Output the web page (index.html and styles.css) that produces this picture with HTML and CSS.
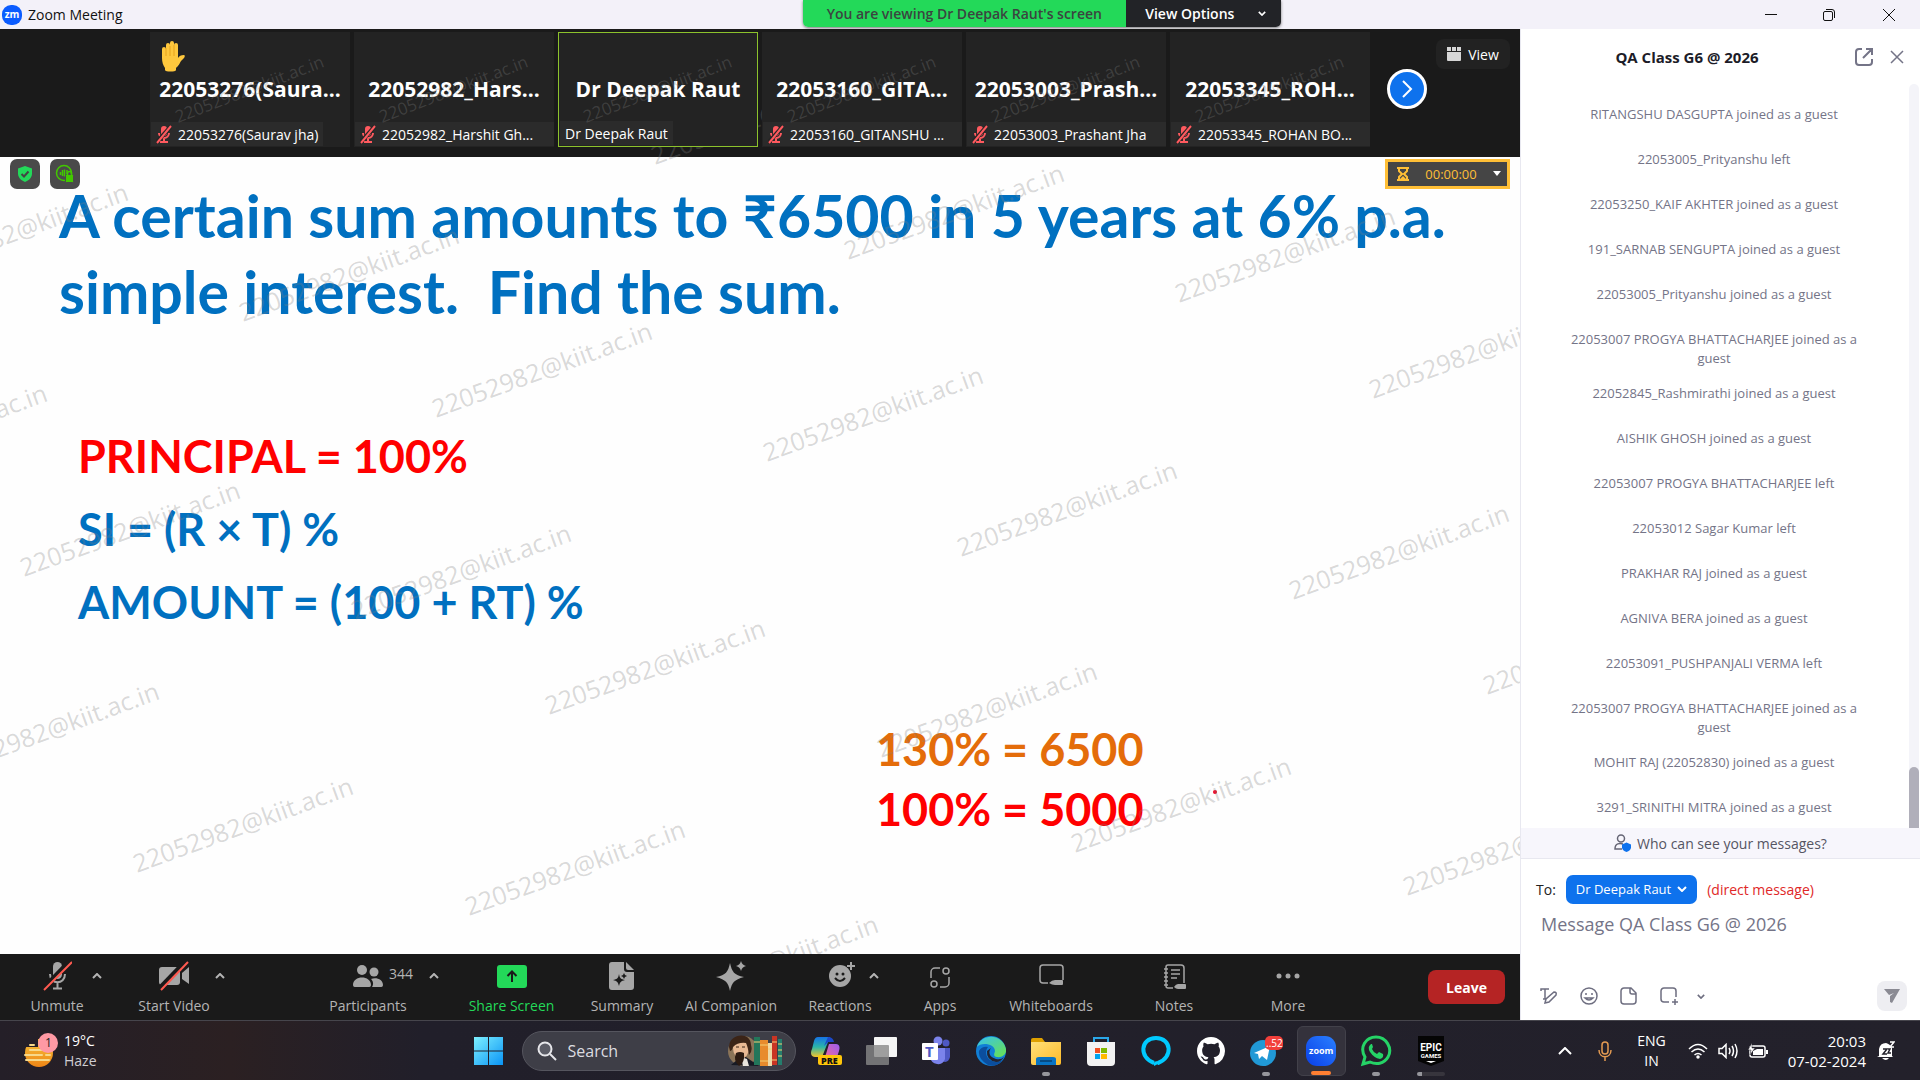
FILE: index.html
```html
<!DOCTYPE html>
<html lang="en">
<head>
<meta charset="utf-8">
<title>Zoom Meeting</title>
<link rel="stylesheet" href="styles.css">
</head>
<body>
<svg class="defs" aria-hidden="true">
  <defs>
    <symbol id="mic-off" viewBox="0 0 16 20"><rect x="5" y="2" width="6" height="10" rx="3" fill="#ff5a5f"/><path d="M3 9a5 5 0 0 0 10 0M8 14v4M4 18h8" fill="none" stroke="#ff5a5f" stroke-width="2"/><path d="M0 19 15 2" stroke="#252525" stroke-width="4"/><path d="M1 19 15 2" stroke="#ff5a5f" stroke-width="2"/></symbol>
    <symbol id="up" viewBox="0 0 10 6"><path d="M1 5l4-4 4 4" fill="none" stroke="currentColor" stroke-width="2"/></symbol>
    <symbol id="down" viewBox="0 0 10 6"><path d="M1 1l4 4 4-4" fill="none" stroke="currentColor" stroke-width="2"/></symbol>
    <linearGradient id="win" x1="0" y1="0" x2="1" y2="1"><stop offset="0" stop-color="#7df0ff"/><stop offset="1" stop-color="#0a94f5"/></linearGradient>
    <linearGradient id="zm" x1="0" y1="1" x2="1" y2="0"><stop offset="0" stop-color="#0a3fe8"/><stop offset="1" stop-color="#2a80ff"/></linearGradient>
    <linearGradient id="haze" x1="0" y1="0" x2="0" y2="1"><stop offset="0" stop-color="#f6c33a"/><stop offset="1" stop-color="#ee8516"/></linearGradient>
    <linearGradient id="edge-a" x1="0" y1="0" x2="1" y2="1"><stop offset="0" stop-color="#35c1f1"/><stop offset="1" stop-color="#6be24b"/></linearGradient>
    <linearGradient id="cop-a" x1="0" y1="0" x2="0" y2="1"><stop offset="0" stop-color="#1672e6"/><stop offset=".5" stop-color="#2bb6a8"/><stop offset="1" stop-color="#f3c62c"/></linearGradient>
    <linearGradient id="cop-b" x1="1" y1="0" x2="0" y2="1"><stop offset="0" stop-color="#9a5cf0"/><stop offset="1" stop-color="#ff6e8e"/></linearGradient>
    <linearGradient id="fold" x1="0" y1="0" x2="1" y2="1"><stop offset="0" stop-color="#ffe07a"/><stop offset="1" stop-color="#fdbb28"/></linearGradient>
  </defs>
</svg>

<div class="app">
  <header class="titlebar">
    <div class="title"><span class="zm-logo">zm</span><span>Zoom Meeting</span></div>
    <div class="banner">
      <span class="viewing">You are viewing Dr Deepak Raut's screen</span>
      <button class="view-options">View Options <svg width="8" height="5"><use href="#down"/></svg></button>
    </div>
    <div class="win-controls">
      <button aria-label="Minimize"><svg width="14" height="14"><path d="M1 6.500h12" stroke="#111"/></svg></button>
      <button aria-label="Restore"><svg width="14" height="14" fill="none" stroke="#111"><rect x="1.500" y="3.500" width="9" height="9" rx="1.500"/><path d="M4 1.500h6a2.500 2.500 0 0 1 2.500 2.500v6"/></svg></button>
      <button aria-label="Close"><svg width="14" height="14"><path d="M1 1l12 12M13 1 1 13" stroke="#111"/></svg></button>
    </div>
  </header>

  <div class="main">
    <main class="meeting">
      <div class="stage">
        <section class="filmstrip">
          <div class="tiles">
            <div class="tile"><span class="hand"><svg width="26" height="32" viewBox="0 0 26 32"><path d="M3 9a2 2 0 0 1 4 0V5a2 2 0 0 1 4 0V3a2 2 0 0 1 4 0v2a2 2 0 0 1 4 0v13c1-2 3-3 6-3 1 0 1 2 0 3l-3 3c-2 4-3 5-5 7v2c0 2-11 2-11 0v-2c-2-3-3-6-3-10z" fill="#ffc83d"/><path d="M7 8v8M11 6v10M15 5v11" stroke="#e8a31c"/></svg></span><b>22053276(Saura...</b><span class="tag"><svg width="16" height="20"><use href="#mic-off"/></svg>22053276(Saurav jha)</span></div>
            <div class="tile"><b>22052982_Hars...</b><span class="tag full"><svg width="16" height="20"><use href="#mic-off"/></svg>22052982_Harshit Gh...</span></div>
            <div class="tile active"><b>Dr Deepak Raut</b><span class="tag">Dr Deepak Raut</span></div>
            <div class="tile"><b>22053160_GITA...</b><span class="tag full"><svg width="16" height="20"><use href="#mic-off"/></svg>22053160_GITANSHU ...</span></div>
            <div class="tile"><b>22053003_Prash...</b><span class="tag full"><svg width="16" height="20"><use href="#mic-off"/></svg>22053003_Prashant Jha</span></div>
            <div class="tile"><b>22053345_ROH...</b><span class="tag full"><svg width="16" height="20"><use href="#mic-off"/></svg>22053345_ROHAN BO...</span></div>
          </div>
          <button class="next" aria-label="Next"><svg width="12" height="18"><path d="M2 1l8 8-8 8" fill="none" stroke="#fff" stroke-width="2"/></svg></button>
          <button class="view"><svg width="14" height="14" fill="#d6d6d6"><path d="M0 5h14v8a1 1 0 0 1-1 1H1a1 1 0 0 1-1-1z"/><rect width="4" height="4"/><rect x="5" width="4" height="4"/><rect x="10" width="4" height="4"/></svg>View</button>
        </section>

        <section class="slide">
          <h1>A certain sum amounts to ₹6500 in 5 years at 6% p.a.<br>simple interest.&nbsp; Find the sum.</h1>
          <div class="formulas">
            <p class="red">PRINCIPAL = 100%</p>
            <p>SI = (R × T) %</p>
            <p>AMOUNT = (100 + RT) %</p>
          </div>
          <div class="answers">
            <p class="orange">130% = 6500</p>
            <p class="red">100% = 5000</p>
          </div>
          <span class="pointer"></span>
          <div class="badges">
            <span><svg width="18" height="18" viewBox="0 0 18 18"><path d="M9 1l7 2.500v5c0 4-3 7-7 8.500C5 15.500 2 12.500 2 8.500v-5z" fill="#23d959"/><path d="M5.500 9l2.500 2.500 4.500-5" fill="none" stroke="#444" stroke-width="2"/></svg></span>
            <span><svg width="20" height="20" viewBox="0 0 20 20"><circle cx="9" cy="9" r="7.500" fill="none" stroke="#42c800" stroke-width="1.500"/><path d="M5.500 8v3M7.500 6v6M9.500 5.500v7M12 6v4" stroke="#42c800" stroke-width="1.500"/><rect x="10.500" y="10.500" width="8" height="8" rx="1" fill="#42c800" stroke="#4a4a4a"/><path d="M12.500 11V9.500a2 2 0 0 1 4 0V11" fill="none" stroke="#42c800" stroke-width="1.500"/></svg></span>
          </div>
          <button class="timer"><svg width="12" height="14" viewBox="0 0 12 14"><path d="M0 1h12M0 13h12M2 1v3l3 3-3 3v3M10 1v3L7 7l3 3v3" fill="none" stroke="#ffbf36" stroke-width="2"/><path d="M3 12l3-3 3 3z" fill="#ffbf36"/></svg><span>00:00:00</span><svg width="8" height="6"><path d="M0 0h8L4 5z" fill="#fff"/></svg></button>
        </section>

        <svg class="watermarks wm-small" aria-hidden="true">
          <text transform="translate(178 94) rotate(-21)">22052982@kiit.ac.in</text>
          <text transform="translate(382 94) rotate(-21)">22052982@kiit.ac.in</text>
          <text transform="translate(586 94) rotate(-21)">22052982@kiit.ac.in</text>
          <text transform="translate(790 94) rotate(-21)">22052982@kiit.ac.in</text>
          <text transform="translate(994 94) rotate(-21)">22052982@kiit.ac.in</text>
          <text transform="translate(1198 94) rotate(-21)">22052982@kiit.ac.in</text>
        </svg>
        <svg class="watermarks wm-large" aria-hidden="true">
          <text transform="translate(-88 250) rotate(-20)">22052982@kiit.ac.in</text>
          <text transform="translate(243 293) rotate(-20)">22052982@kiit.ac.in</text>
          <text transform="translate(436 389) rotate(-20)">22052982@kiit.ac.in</text>
          <text transform="translate(655 136) rotate(-20)">22052982@kiit.ac.in</text>
          <text transform="translate(848 231) rotate(-20)">22052982@kiit.ac.in</text>
          <text transform="translate(1179 274) rotate(-20)">22052982@kiit.ac.in</text>
          <text transform="translate(767 433) rotate(-20)">22052982@kiit.ac.in</text>
          <text transform="translate(961 528) rotate(-20)">22052982@kiit.ac.in</text>
          <text transform="translate(1293 571) rotate(-20)">22052982@kiit.ac.in</text>
          <text transform="translate(1373 370) rotate(-20)">22052982@kiit.ac.in</text>
          <text transform="translate(1487 666) rotate(-20)">22052982@kiit.ac.in</text>
          <text transform="translate(-169 451) rotate(-20)">22052982@kiit.ac.in</text>
          <text transform="translate(24 548) rotate(-20)">22052982@kiit.ac.in</text>
          <text transform="translate(355 591) rotate(-20)">22052982@kiit.ac.in</text>
          <text transform="translate(549 686) rotate(-20)">22052982@kiit.ac.in</text>
          <text transform="translate(881 729) rotate(-20)">22052982@kiit.ac.in</text>
          <text transform="translate(1075 824) rotate(-20)">22052982@kiit.ac.in</text>
          <text transform="translate(1407 867) rotate(-20)">22052982@kiit.ac.in</text>
          <text transform="translate(-57 749) rotate(-20)">22052982@kiit.ac.in</text>
          <text transform="translate(137 844) rotate(-20)">22052982@kiit.ac.in</text>
          <text transform="translate(469 887) rotate(-20)">22052982@kiit.ac.in</text>
          <text transform="translate(662 982) rotate(-20)">22052982@kiit.ac.in</text>
        </svg>
      </div>

      <nav class="toolbar">
        <div class="cell c1"><button class="tool"><svg width="30" height="30" viewBox="0 0 30 30"><rect x="11" y="1" width="9" height="17" rx="4.500" fill="#a6a6a6"/><path d="M8 13c0 11 15 11 15 0M15.500 21v6M11 27.500h9" fill="none" stroke="#a6a6a6" stroke-width="2"/><path d="M1 28 28 0" stroke="#1a1a1a" stroke-width="5"/><path d="M2 29 30 1" stroke="#ff5a50" stroke-width="2"/></svg><span>Unmute</span></button><button class="caret" aria-label="Audio options"><svg width="10" height="6"><use href="#up"/></svg></button></div>
        <div class="cell c2"><button class="tool"><svg width="30" height="30" viewBox="0 0 30 30"><rect x="0" y="6" width="21" height="18" rx="3" fill="#a6a6a6"/><path d="M23 12l7-6v17l-7-5z" fill="#a6a6a6"/><path d="M1 27 27 0" stroke="#1a1a1a" stroke-width="5"/><path d="M2 29 29 1" stroke="#ff5a50" stroke-width="2"/></svg><span>Start Video</span></button><button class="caret" aria-label="Video options"><svg width="10" height="6"><use href="#up"/></svg></button></div>
        <div class="cell c3"><button class="tool"><svg width="30" height="30" viewBox="0 0 30 30" fill="#a6a6a6"><circle cx="9" cy="9" r="5"/><circle cx="21" cy="11" r="4.500"/><path d="M0 24c0-10 18-10 18 0 0 2-2 2-2 2H2s-2 0-2-2zM19 26c2-3 1-6-1-8 6-2 12 1 12 6 0 2-2 2-2 2z"/></svg><span>Participants</span></button><span class="count">344</span><button class="caret" aria-label="Participant options"><svg width="10" height="6"><use href="#up"/></svg></button></div>
        <div class="cell c4"><button class="tool share"><svg width="30" height="30" viewBox="0 0 30 30"><rect y="4" width="30" height="23" rx="3" fill="#23d959"/><path d="M15 21V11M10.500 15 15 10.500 19.500 15" fill="none" stroke="#1a1a1a" stroke-width="2"/></svg><span>Share Screen</span></button></div>
        <div class="cell"><button class="tool"><svg width="30" height="30" viewBox="0 0 30 30" fill="#a6a6a6"><path d="M5 1h12v7a3 3 0 0 0 3 3h7v15a3 3 0 0 1-3 3H5a3 3 0 0 1-3-3V4a3 3 0 0 1 3-3z"/><path d="M19 1l8 8h-6a2 2 0 0 1-2-2z"/><path d="M12 13c1 5 2 5 6 6-4 1-5 2-6 6-1-4-2-5-6-6 4-1 5-1 6-6zM17 12l1 2 2 1-2 1-1 2-1-2-2-1 2-1z" fill="#1a1a1a"/></svg><span>Summary</span></button></div>
        <div class="cell"><button class="tool"><svg width="30" height="30" viewBox="0 0 30 30" fill="#a6a6a6"><path d="M14 2c2 9 4 12 14 14-10 3-12 5-14 14C12 21 10 19 0 16 10 14 12 11 14 2zM25 0c1 3 2 4 5 5-3 1-4 2-5 5-1-3-2-4-5-5 3-1 4-2 5-5z"/></svg><span>AI Companion</span></button></div>
        <div class="cell c7"><button class="tool"><svg width="30" height="30" viewBox="0 0 30 30"><circle cx="15" cy="15" r="11" fill="#a6a6a6"/><path d="M22 5h8M26 1v8" stroke="#1a1a1a" stroke-width="4"/><path d="M22 5h8M26 1v8" stroke="#a6a6a6" stroke-width="2"/><circle cx="12" cy="13" r="1.500" fill="#1a1a1a"/><circle cx="18" cy="13" r="1.500" fill="#1a1a1a"/><path d="M10 17q5 6 10 0" fill="none" stroke="#1a1a1a" stroke-width="2"/></svg><span>Reactions</span></button><button class="caret" aria-label="Reaction options"><svg width="10" height="6"><use href="#up"/></svg></button></div>
        <div class="cell"><button class="tool"><svg width="30" height="30" viewBox="0 0 30 30" fill="none" stroke="#a6a6a6" stroke-width="1.500"><circle cx="21" cy="10" r="3"/><circle cx="9" cy="23" r="3"/><path d="M6 17v-6a4 4 0 0 1 4-4h5M24 16v6a4 4 0 0 1-4 4h-5"/></svg><span>Apps</span></button></div>
        <div class="cell"><button class="tool"><svg width="30" height="30" viewBox="0 0 30 30" fill="none" stroke="#a6a6a6" stroke-width="1.500"><path d="M12 22H7a3 3 0 0 1-3-3V7a3 3 0 0 1 3-3h17a3 3 0 0 1 3 3v12"/><path d="M13 22q3-3 6-3h7a1 1 0 0 1 1 1v3a1 1 0 0 1-1 1h-7q-3 0-6-2z" fill="#a6a6a6" stroke="none"/></svg><span>Whiteboards</span></button></div>
        <div class="cell"><button class="tool"><svg width="30" height="30" viewBox="0 0 30 30" fill="none" stroke="#a6a6a6" stroke-width="1.500"><path d="M14 27H9a2 2 0 0 1-2-2V6a2 2 0 0 1 2-2h13a3 3 0 0 1 3 3v15M12 9h9M12 13h9M12 17h6M5 8h4M5 12h4M5 16h4M5 20h4M5 24h4"/><path d="M15 26q2-3 4-3h7a1 1 0 0 1 1 1v3a1 1 0 0 1-1 1h-7q-2 0-4-2z" fill="#a6a6a6" stroke="none"/></svg><span>Notes</span></button></div>
        <div class="cell"><button class="tool"><svg width="30" height="30" viewBox="0 0 30 30" fill="#a6a6a6"><circle cx="6" cy="15" r="2.500"/><circle cx="15" cy="15" r="2.500"/><circle cx="24" cy="15" r="2.500"/></svg><span>More</span></button></div>
        <div class="cell end"><button class="leave">Leave</button></div>
      </nav>
    </main>

    <aside class="chat">
      <header class="chat-head">
        <h2>QA Class G6 @ 2026</h2>
        <button aria-label="Pop out"><svg width="20" height="20" viewBox="0 0 20 20" fill="none" stroke="#747487" stroke-width="2"><path d="M8 2H5a3 3 0 0 0-3 3v10a3 3 0 0 0 3 3h10a3 3 0 0 0 3-3v-3M12 2h6v6M18 2l-9 9"/></svg></button>
        <button aria-label="Close chat"><svg width="14" height="14"><path d="M1 1l12 12M13 1 1 13" stroke="#747487" stroke-width="1.500"/></svg></button>
      </header>
      <div class="log">
        <ul class="messages">
          <li>RITANGSHU DASGUPTA joined as a guest</li>
          <li>22053005_Prityanshu left</li>
          <li>22053250_KAIF AKHTER joined as a guest</li>
          <li>191_SARNAB SENGUPTA joined as a guest</li>
          <li>22053005_Prityanshu joined as a guest</li>
          <li>22053007 PROGYA BHATTACHARJEE joined as a guest</li>
          <li>22052845_Rashmirathi joined as a guest</li>
          <li>AISHIK GHOSH joined as a guest</li>
          <li>22053007 PROGYA BHATTACHARJEE left</li>
          <li>22053012 Sagar Kumar left</li>
          <li>PRAKHAR RAJ joined as a guest</li>
          <li>AGNIVA BERA joined as a guest</li>
          <li>22053091_PUSHPANJALI VERMA left</li>
          <li>22053007 PROGYA BHATTACHARJEE joined as a guest</li>
          <li>MOHIT RAJ (22052830) joined as a guest</li>
          <li>3291_SRINITHI MITRA joined as a guest</li>
        </ul>
        <div class="track"><div class="thumb"></div></div>
      </div>
      <button class="who"><svg width="18" height="18" viewBox="0 0 18 18"><circle cx="7" cy="4.500" r="3.500" fill="none" stroke="#666675" stroke-width="1.500"/><path d="M8 15H1c0-6 5-6 8-5" fill="none" stroke="#666675" stroke-width="1.500"/><path d="M12.500 8.500l4.500 2v3c0 2-2 3.500-4.500 4.500C10 17 8 15.500 8 13.500v-3z" fill="#0e72ed"/></svg>Who can see your messages?</button>
      <div class="composer">
        <div class="to"><span>To:</span><button class="recipient">Dr Deepak Raut <svg width="10" height="6"><use href="#down"/></svg></button><span class="direct">(direct message)</span></div>
        <textarea aria-label="Message" placeholder="Message QA Class G6 @ 2026"></textarea>
        <div class="actions">
          <button aria-label="Format"><svg width="18" height="18" viewBox="0 0 18 18" fill="none" stroke="#6e6e80" stroke-width="1.500"><path d="M1 4V2h8M5 2v10H3M5 16l1-4 8-7q3 0 2 3l-7 7z"/></svg></button>
          <button aria-label="Emoji"><svg width="18" height="18" viewBox="0 0 18 18" fill="none" stroke="#6e6e80" stroke-width="1.500"><circle cx="9" cy="9" r="8"/><path d="M5 11q4 4 8 0z"/><path d="M6 6v2M12 6v2"/></svg></button>
          <button aria-label="File"><svg width="18" height="18" viewBox="0 0 18 18" fill="none" stroke="#6e6e80" stroke-width="1.500"><path d="M4 1h7l5 5v8a3 3 0 0 1-3 3H4a3 3 0 0 1-3-3V4a3 3 0 0 1 3-3zM10 1v4a2 2 0 0 0 2 2h4"/></svg></button>
          <button aria-label="Screenshot"><svg width="18" height="18" viewBox="0 0 18 18" fill="none" stroke="#6e6e80" stroke-width="1.500"><path d="M9 15H4a3 3 0 0 1-3-3V4a3 3 0 0 1 3-3h9a3 3 0 0 1 3 3v6M12 15h6M15 12v6"/></svg></button>
          <button class="more" aria-label="More"><svg width="8" height="5"><use href="#down"/></svg></button>
          <button class="send" aria-label="Send"><svg width="16" height="16" viewBox="0 0 16 16" fill="#8a8a93"><path d="M0 1h16L8 15l-2-1V8l4-3-5 2z"/></svg></button>
        </div>
      </div>
    </aside>
  </div>

  <footer class="taskbar">
    <button class="weather">
      <svg width="36" height="38" viewBox="0 0 36 38"><circle cx="15" cy="21" r="14" fill="url(#haze)"/><path d="M4 4h9v9H4z" fill="#241f28"/><path d="M0 7h14v8H0z" fill="#241f28"/><path d="M6 13h4M6 18h18M1 23h17M22 23h4M2 28h23" stroke="#f7d98a" stroke-width="2" stroke-linecap="round"/><circle cx="24" cy="11" r="10" fill="#ff99a4"/><text x="21" y="15" class="notice">1</text></svg>
      <span>19°C<br><i>Haze</i></span>
    </button>
    <div class="apps">
      <button aria-label="Start"><svg width="30" height="30" viewBox="0 0 30 30" fill="url(#win)"><path d="M0 1h14v13.500H0zM15 1h14v13.500H15zM0 15.500h14V29H0zM15 15.500h14V29H15z"/></svg></button>
      <label class="search"><svg width="20" height="20" viewBox="0 0 20 20"><circle cx="8" cy="8" r="6.500" fill="#5b5c66" stroke="#e6e6ea" stroke-width="2"/><path d="M13 13l6 6" stroke="#e6e6ea" stroke-width="2"/></svg><input type="text" placeholder="Search" aria-label="Search">
        <svg width="56" height="32" viewBox="0 0 56 32"><circle cx="16" cy="16" r="15" fill="#8b7458"/><path d="M4 30l12-10 16 11z" fill="#171a24"/><path d="M14 22l6 2 2 7h-6z" fill="#e9e4dc"/><ellipse cx="14" cy="13" rx="8" ry="11" fill="#e8b994"/><path d="M2 12C2-2 24-4 24 10q2 6-2 10-1-8-3-12-8-1-13 4-1 4-3 4z" fill="#3b2417"/><path d="M9 18q4-2 8 0 1 10-5 13-6-5-3-13z" fill="#2c1b12"/><path d="M9 12h3M15 12h3" stroke="#3b2417"/><rect x="27" y="2" width="6" height="28" fill="#23765a"/><rect x="33" y="5" width="8" height="26" fill="#e88b2c"/><rect x="41" y="8" width="4" height="23" fill="#efd9a5"/><rect x="45" y="1" width="5" height="29" fill="#c93524"/><rect x="51" y="4" width="4" height="26" fill="#257e6d"/><path d="M27 7h6M33 10h8M33 26h8M41 14h4M45 7h5M45 25h5M51 9h4M51 15h4M51 21h4" stroke="#f4cf72"/></svg></label>
      <button aria-label="Copilot"><svg width="32" height="32" viewBox="0 0 32 32"><path d="M8 2h12l-2 5-6 15H5c-4 0-5-4-3-8l2-8q1-4 4-4z" fill="url(#cop-a)"/><path d="M18 2q5 0 6 5h-6l-4 4z" fill="#1c48c8"/><path d="M19 9h7c4 0 4 4 3 7l-2 6q-2 4-5 4h-9l3-7z" fill="url(#cop-b)"/><rect x="8" y="20" width="24" height="10" rx="2" fill="#ffc60a"/><text x="11" y="29" class="pre">PRE</text></svg></button>
      <button aria-label="Task view"><svg width="32" height="30" viewBox="0 0 32 30"><rect x="9" y="1" width="23" height="20" rx="1" fill="#f5f5f5"/><rect x="1" y="9" width="23" height="20" rx="1" fill="#888" opacity=".8"/></svg></button>
      <button aria-label="Teams"><svg width="30" height="30" viewBox="0 0 30 30"><circle cx="25" cy="7" r="3.500" fill="#4e58c4"/><circle cx="17" cy="5" r="4.500" fill="#7b83eb"/><path d="M20 12h9v9q-2 7-8 4z" fill="#4e58c4"/><path d="M9 12h15v11q-2 6-8 5-6-1-7-7z" fill="#7b83eb"/><rect x="1" y="7" width="16" height="17" rx="1" fill="#fff"/><text x="4" y="21" class="teams-t">T</text></svg></button>
      <button aria-label="Edge"><svg width="30" height="30" viewBox="0 0 30 30"><circle cx="15" cy="15" r="15" fill="#117fd6"/><path d="M1 11C4-2 26-4 30 13c1 5-4 9-9 8-5-1-2-4-2-6 0-8-15-9-18-4z" fill="url(#edge-a)"/><path d="M12 11c-4 5-2 13 7 15q4 0 8-2-7 8-15 5-10-6-9-14 3-5 9-4z" fill="#0b4e9e"/><path d="M15 12c-3 4-2 9 5 11q5 1 8-2-3 5-8 5-10-2-9-11z" fill="#242432"/></svg></button>
      <button aria-label="File Explorer" class="running"><svg width="32" height="30" viewBox="0 0 32 30"><path d="M1 4q0-2 2-2h9l3 4H1z" fill="#dfa000"/><path d="M1 6h30v21q0 2-2 2H3q-2 0-2-2z" fill="url(#fold)"/><path d="M6 29v-6q0-2 3-2h14q3 0 3 2v6z" fill="#0874c4"/><path d="M10 25h12" stroke="#064c85" stroke-width="2"/></svg></button>
      <button aria-label="Store"><svg width="30" height="30" viewBox="0 0 30 30"><path d="M8 7V2h14v5" fill="none" stroke="#2aa7e8" stroke-width="2"/><path d="M1 6h28v20q0 4-4 4H5q-4 0-4-4z" fill="#f2f2f2"/><path d="M9 12h5v5H9z" fill="#f25022"/><path d="M15 12h6v5h-6z" fill="#7fba00"/><path d="M9 18h5v5H9z" fill="#00a4ef"/><path d="M15 18h6v5h-6z" fill="#ffb900"/></svg></button>
      <button aria-label="Alexa"><svg width="30" height="32" viewBox="0 0 30 32"><path d="M13 28C-2 23-1 3 15 3s17 20 2 25q-3 0-2 2" fill="none" stroke="#00caff" stroke-width="4"/></svg></button>
      <button aria-label="GitHub"><svg width="28" height="28" viewBox="0 0 16 16"><path fill="#fff" d="M8 0C3.580 0 0 3.580 0 8c0 3.540 2.290 6.530 5.470 7.590.4.070.55-.17.55-.38v-1.490c-2.010.37-2.530-.49-2.690-.94-.09-.23-.48-.94-.82-1.130-.28-.15-.68-.52-.01-.53.63-.01 1.080.58 1.230.82.72 1.210 1.870.87 2.330.66.07-.52.28-.87.51-1.070-1.780-.2-3.640-.89-3.640-3.950 0-.87.31-1.590.82-2.150-.08-.2-.36-1.020.08-2.120 0 0 .67-.21 2.200.82a7.600 7.600 0 0 1 4 0c1.530-1.040 2.200-.82 2.200-.82.44 1.100.16 1.920.08 2.120.51.560.82 1.270.82 2.150 0 3.070-1.870 3.750-3.650 3.950.29.25.54.73.54 1.480v2.200c0 .21.15.46.55.38A8 8 0 0 0 16 8c0-4.420-3.580-8-8-8z"/></svg></button>
      <button aria-label="Telegram" class="running"><svg width="36" height="32" viewBox="0 0 36 32"><circle cx="15" cy="18" r="13" fill="#2199d6"/><path d="M6 18l16-7-3 14-5-4-3 3-1-5z" fill="#fff"/><rect x="17" y="1" width="18" height="14" rx="5" fill="#f23f3b"/><text x="18" y="12" class="unread">..52</text></svg></button>
      <button aria-label="Zoom" class="running current"><svg width="30" height="30" viewBox="0 0 30 30"><rect width="30" height="30" rx="11" fill="url(#zm)"/><text x="3" y="18" class="zoom-t">zoom</text></svg></button>
      <button aria-label="WhatsApp" class="running"><svg width="32" height="32" viewBox="0 0 32 32"><path d="M3 29l2-7C-1 12 6 2 16 2s17 11 12 20c-4 7-12 8-18 5z" fill="none" stroke="#25d366" stroke-width="3"/><path d="M11 9q-4 3-1 8 4 6 10 7 4-1 3-5l-4-2-2 2q-4-2-5-5l1-2-1-3z" fill="#25d366"/></svg></button>
      <button aria-label="Epic Games" class="running loading"><svg width="28" height="30" viewBox="0 0 28 30"><path d="M1 0h26v25l-13 5L1 25z" fill="#050505"/><text x="14" y="15" class="epic">EPIC</text><text x="14" y="22" class="games">GAMES</text><path d="M9 25h10l-5 2z" fill="#fff"/></svg></button>
    </div>
    <div class="tray">
      <button aria-label="Hidden icons"><svg width="14" height="8" viewBox="0 0 14 8"><path d="M1 7l6-6 6 6" fill="none" stroke="#fff" stroke-width="2"/></svg></button>
      <button aria-label="Microphone" class="mic"><svg width="14" height="20" viewBox="0 0 14 20" fill="none" stroke="#e39a52" stroke-width="1.500"><rect x="4" y="1" width="6" height="12" rx="3"/><path d="M1 9c0 9 12 9 12 0M7 16v4"/></svg></button>
      <button class="lang">ENG<br>IN</button>
      <button class="status" aria-label="System status">
        <svg width="20" height="16" viewBox="0 0 20 16" fill="none" stroke="#fff" stroke-width="1.500"><path d="M1 6q9-9 18 0M3.500 9q6.500-6 13 0M6.500 12q3.500-3 7 0"/><circle cx="10" cy="14" r="1" fill="#fff"/></svg>
        <svg width="20" height="16" viewBox="0 0 20 16" fill="none" stroke="#fff" stroke-width="1.500"><path d="M1 5.500h3l4-4v13l-4-4H1zM11 5q2 3 0 6M14 3q3 5 0 10M17 1q4 7 0 14"/></svg>
        <svg width="20" height="16" viewBox="0 0 20 16"><rect x="2" y="3" width="15" height="11" rx="2" fill="none" stroke="#fff" stroke-width="1.500"/><path d="M5 8l4-2h6v6H5zM18 7h2v4h-2z" fill="#fff"/><path d="M4 0L0 7h3l-1 5 5-7H4z" fill="#fff" stroke="#22202a" stroke-width=".5"/></svg>
      </button>
      <button class="clock">20:03<br>07-02-2024</button>
      <button aria-label="Notifications" class="bell"><svg width="18" height="20" viewBox="0 0 18 20"><path d="M2 15V8q1-6 7-6 4 1 6 5v8l1 1H0z" fill="#fff"/><path d="M5 17h7q-3 4-7 0z" fill="#fff"/><path d="M6 8h4l-4 5h4M11 8h2l-2 4h3" fill="none" stroke="#22202a" stroke-width="1.500"/><path d="M13 1h4l-4 5h4" fill="none" stroke="#fff" stroke-width="1.500"/></svg></button>
    </div>
  </footer>
</div>
</body>
</html>
```
FILE: styles.css
```css
* { box-sizing: border-box; }
body { margin: 0; font-family: "Open Sans", "Noto Sans", sans-serif; font-size: 14px; color: #222; }
button { border: 0; padding: 0; margin: 0; background: none; color: inherit; font: inherit; display: inline-flex; align-items: center; justify-content: center; }
svg { flex: none; display: block; }
h1, h2, p, ul { margin: 0; padding: 0; }
.defs { position: absolute; width: 0; height: 0; }
.app { min-height: 100vh; display: flex; flex-direction: column; }

/* Title bar */
.titlebar { height: 29px; background: #f3f1f9; display: grid; grid-template-columns: 803fr 478px 639fr; align-items: start; }
.title { display: flex; align-items: center; gap: 6px; height: 29px; padding-left: 2px; color: #111; }
.zm-logo { width: 20px; height: 20px; border-radius: 9px; background: #0b5cff; color: #fff; font-weight: 700; font-size: 10px; line-height: 18px; text-align: center; }
.banner { display: flex; height: 27px; border-radius: 0 0 5px 5px; overflow: hidden; box-shadow: 0 1px 3px #777; font-weight: 600; }
.viewing { flex: 326; background: #23d959; color: #3b4440; text-align: center; line-height: 27px; white-space: nowrap; }
.view-options { flex: 152; background: #222327; color: #fff; gap: 24px; padding-left: 5px; }
.win-controls { display: flex; justify-content: flex-end; height: 29px; }
.win-controls button { width: 58px; }
.win-controls button:last-child { width: 62px; }

.main { flex: 1; display: flex; }
.meeting { flex: 1; min-width: 0; display: flex; flex-direction: column; }
.stage { flex: 1; position: relative; display: flex; flex-direction: column; overflow: hidden; }

/* Participant strip */
.filmstrip { height: 128px; background: #1a1a1a; display: flex; padding: 3px 10px 0 150px; color: #fff; }
.tiles { display: flex; gap: 4px; position: relative; z-index: 1; }
.tile { position: relative; width: 200px; height: 115px; background: #232323; display: flex; align-items: center; justify-content: center; }
.tile b { font-size: 21px; line-height: 28px; padding-bottom: 2px; font-weight: 700; white-space: nowrap; }
.tile.active { border: 1px solid #8cc22c; }
.hand { position: absolute; left: 9px; top: 8px; }
.tag { position: absolute; left: 1px; bottom: 1px; height: 24px; padding: 0 5px; background: #2b2b2b; display: flex; align-items: center; gap: 6px; white-space: nowrap; }
.tag.full { right: 0; }
.next { width: 40px; height: 40px; margin: 37px 0 0 17px; border-radius: 50%; background: #0e72ed; border: 3px solid #fff; }
.view { margin: 7px 0 0 auto; width: 74px; height: 30px; border-radius: 8px; background: #222; gap: 7px; }

/* Shared slide */
.slide { flex: 1; position: relative; background: #fefefe; padding: 21px 0 0 59px; font-family: Lato, sans-serif; font-weight: 700; color: #0070c0; }
.slide h1 { font-size: 59px; line-height: 76px; font-weight: 700; white-space: nowrap; }
.formulas { margin: 90px 0 0 19px; font-size: 45px; line-height: 73px; white-space: nowrap; }
.answers { margin: 80px 0 0 817px; font-size: 45px; line-height: 60px; white-space: nowrap; }
.red { color: #f00; }
.orange { color: #e46c0a; }
.pointer { position: absolute; left: 1213px; top: 633px; width: 4px; height: 4px; border-radius: 2px; background: #f00020; }
.badges { position: absolute; left: 10px; top: 2px; display: flex; gap: 10px; }
.badges span { width: 30px; height: 30px; border-radius: 7px; background: #4a4a4a; display: flex; align-items: center; justify-content: center; }
.timer { position: absolute; right: 10px; top: 2px; width: 125px; height: 30px; border: 3px solid #ffbf36; background: #454545; color: #ffbf36; font: 13px "Open Sans", sans-serif; justify-content: space-between; padding: 0 6px 0 9px; }
.watermarks { position: absolute; left: 0; top: 0; width: 100%; height: 100%; pointer-events: none; fill: #808080; fill-opacity: .3; }
.wm-small { z-index: 2; font-size: 17px; }
.wm-large { font-size: 25px; }

/* Meeting controls */
.toolbar { height: 66px; background: #1a1a1a; color: #b4b4b4; display: grid; grid-template-columns: 114fr 120fr 78fr 112fr 32fr 111fr 110fr 108fr 110fr 90fr 132fr 114fr 114fr 175fr; }
.cell { position: relative; display: flex; justify-content: center; }
.c3 { grid-column: 4; }
.c4 { grid-column: 6; }
.tool { flex-direction: column; justify-content: flex-start; gap: 4px; padding-top: 7px; line-height: 22px; white-space: nowrap; }
.share { color: #23d959; }
.caret { position: absolute; top: 14px; left: 50%; width: 20px; height: 16px; margin-left: 30px; }
.c2 .caret { margin-left: 36px; }
.c3 .caret { margin-left: 56px; }
.c7 .caret { margin-left: 24px; }
.count { position: absolute; top: 10px; left: 50%; margin-left: 21px; line-height: 20px; }
.end { justify-content: flex-end; align-items: center; padding-right: 15px; }
.leave { width: 77px; height: 34px; border-radius: 8px; background: #b52424; color: #fff; font-weight: 700; }

/* Chat panel */
.chat { width: 400px; border-left: 1px solid #e8e8f0; background: #fff; display: flex; flex-direction: column; }
.chat-head { height: 55px; display: flex; align-items: center; padding-right: 16px; gap: 16px; }
.chat-head h2 { flex: 1; text-align: center; font-size: 15px; font-weight: 700; padding-left: 15px; color: #1c1c28; }
.log { flex: 1; display: flex; }
.messages { flex: 1; list-style: none; padding: 21px 38px 0 36px; text-align: center; font-size: 13px; line-height: 19px; color: #747487; }
.messages li { min-height: 45px; padding-bottom: 16px; }
.messages li:last-child { min-height: 30px; padding-bottom: 0; }
.track { width: 10px; margin-right: 1px; background: #f4f4f9; border-radius: 5px 5px 0 0; display: flex; flex-direction: column; justify-content: flex-end; }
.thumb { height: 61px; background: #b0afba; border-radius: 5px 5px 0 0; }
.who { height: 31px; background: #f7f6fc; border-bottom: 1px solid #e8e8f0; color: #555563; gap: 5px; }
.composer { height: 161px; padding: 15px 13px 0 15px; display: flex; flex-direction: column; }
.to { display: flex; align-items: center; gap: 10px; height: 30px; }
.recipient { height: 29px; padding: 0 10px; border-radius: 7px; background: #0e72ed; color: #fff; font-size: 13px; gap: 6px; }
.direct { color: #e02828; }
textarea { border: 0; outline: 0; resize: none; padding: 8px 5px; height: 74px; font: 18px "Open Sans", sans-serif; background: none; }
textarea::placeholder { color: #747487; opacity: 1; }
.actions { display: flex; align-items: center; gap: 22px; padding-left: 4px; height: 30px; margin-top: 3px; color: #6e6e80; }
.actions .more { margin-left: -3px; }
.actions .send { margin-left: auto; width: 30px; height: 30px; border-radius: 8px; background: #eeeef2; }

/* Windows taskbar */
.taskbar { height: 60px; border-top: 1px solid #46454c; background: linear-gradient(90deg, #241f28 0, #2b2022 12%, #211f2a 22%, #23212b 100%); color: #fff; display: grid; grid-template-columns: 1fr auto 1fr; }
.weather { justify-self: start; padding-left: 24px; gap: 4px; text-align: left; line-height: 20px; }
.weather i { font-style: normal; color: #cfcdd2; }
.notice { font: 12px "Open Sans", sans-serif; fill: #222; }
.apps { display: flex; align-items: center; }
.apps button { position: relative; width: 55px; height: 50px; border-radius: 6px; }
.search { width: 274px; height: 40px; margin: 0 3px 0 5px; border: 1px solid #55555e; border-radius: 20px; background: #3e3e47; display: flex; align-items: center; gap: 11px; padding: 0 12px 0 14px; }
.search input { flex: 1; min-width: 0; border: 0; padding: 0; outline: 0; background: none; font: 16px "Open Sans", sans-serif; color: #fff; }
.search input::placeholder { color: #dcdce0; opacity: 1; }
.running::after { content: ""; position: absolute; bottom: 0; left: 50%; width: 8px; height: 4px; margin-left: -4px; border-radius: 2px; background: #96969c; }
.apps .current { width: 49px; margin: 0 3px; background: #34323c; border: 1px solid #42414a; }
.current::after { width: 20px; margin-left: -10px; background: #ff7f32; }
.loading::after { width: 28px; margin-left: -14px; background: linear-gradient(90deg, #96969c 5px, #37353d 5px); }
.pre { font: 800 9px "Open Sans", sans-serif; fill: #111; }
.teams-t { font: 700 15px "Open Sans", sans-serif; fill: #4e58c4; }
.unread { font: 10px "Open Sans", sans-serif; fill: #fff; }
.zoom-t { font: 700 9px "Open Sans", sans-serif; fill: #fff; }
.epic { font: 700 10px Roboto, sans-serif; fill: #fff; text-anchor: middle; }
.games { font: 700 6px Roboto, sans-serif; fill: #fff; text-anchor: middle; }
.tray { display: flex; align-items: center; justify-content: flex-end; padding-right: 25px; line-height: 20px; }
.mic { margin-left: 26px; }
.lang { margin-left: 25px; }
.status { gap: 10px; margin-left: 22px; }
.clock { margin-left: 20px; text-align: right; font-size: 15px; }
.bell { margin-left: 11px; }
```
